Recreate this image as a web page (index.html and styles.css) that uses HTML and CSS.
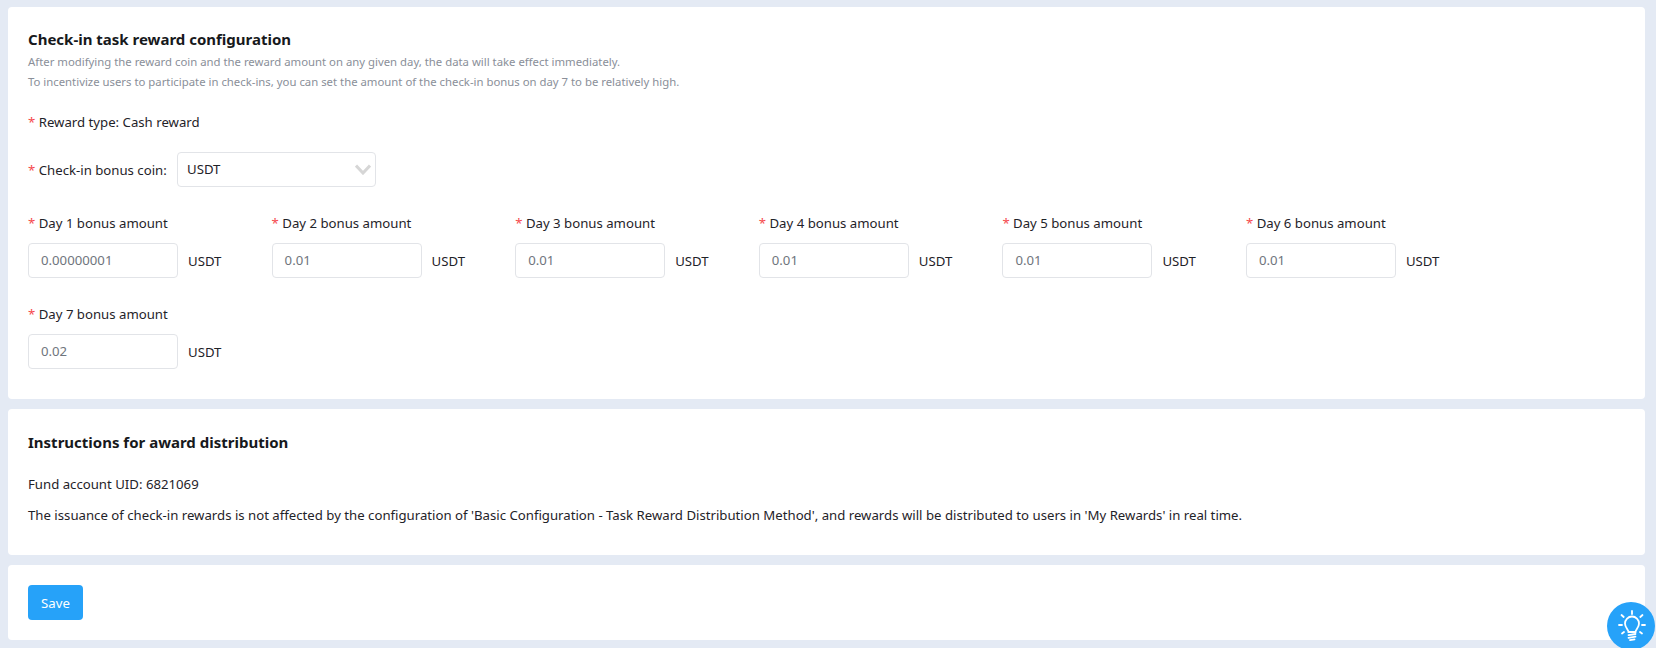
FILE: index.html
```html
<!DOCTYPE html>
<html lang="en">
<head>
<meta charset="utf-8">
<title>Check-in task reward configuration</title>
<link rel="stylesheet" href="styles.css">
</head>
<body>
<main class="page">
  <section class="card card-config">
    <h2 class="title">Check-in task reward configuration</h2>
    <div class="hints">
      <p class="hint">After modifying the reward coin and the reward amount on any given day, the data will take effect immediately.</p>
      <p class="hint">To incentivize users to participate in check-ins, you can set the amount of the check-in bonus on day 7 to be relatively high.</p>
    </div>
    <div class="line reward-type"><span class="req">*</span> Reward type: Cash reward</div>
    <div class="line coin-row">
      <label class="coin-label"><span class="req">*</span> Check-in bonus coin:</label>
      <div class="select">USDT
        <svg class="chev" viewBox="0 0 16 11" width="16" height="11"><path d="M1 1.500 8 9l7-7.500" fill="none" stroke="#d6d6d6" stroke-width="3"/></svg>
      </div>
    </div>
    <div class="days">
      <div class="day"><div class="day-label"><span class="req">*</span> Day 1 bonus amount</div><div class="day-input"><div class="input">0.00000001</div><span>USDT</span></div></div>
      <div class="day"><div class="day-label"><span class="req">*</span> Day 2 bonus amount</div><div class="day-input"><div class="input">0.01</div><span>USDT</span></div></div>
      <div class="day"><div class="day-label"><span class="req">*</span> Day 3 bonus amount</div><div class="day-input"><div class="input">0.01</div><span>USDT</span></div></div>
      <div class="day"><div class="day-label"><span class="req">*</span> Day 4 bonus amount</div><div class="day-input"><div class="input">0.01</div><span>USDT</span></div></div>
      <div class="day"><div class="day-label"><span class="req">*</span> Day 5 bonus amount</div><div class="day-input"><div class="input">0.01</div><span>USDT</span></div></div>
      <div class="day"><div class="day-label"><span class="req">*</span> Day 6 bonus amount</div><div class="day-input"><div class="input">0.01</div><span>USDT</span></div></div>
      <div class="day"><div class="day-label"><span class="req">*</span> Day 7 bonus amount</div><div class="day-input"><div class="input">0.02</div><span>USDT</span></div></div>
    </div>
  </section>
  <section class="card card-info">
    <h2 class="title">Instructions for award distribution</h2>
    <p class="info uid">Fund account UID: 6821069</p>
    <p class="info">The issuance of check-in rewards is not affected by the configuration of 'Basic Configuration - Task Reward Distribution Method', and rewards will be distributed to users in 'My Rewards' in real time.</p>
  </section>
  <section class="card card-save">
    <button class="btn" type="button">Save</button>
  </section>
</main>
<div class="help">
  <svg viewBox="-1 0 48 48" width="48" height="48" fill="none" stroke="#fff" stroke-linecap="round">
    <path d="M20.500 30c0-2.500-3.500-4-3.500-8.500a7 7 0 0 1 14 0c0 4.500-3.500 6-3.500 8.500z" stroke-width="1.800"/>
    <path d="M20.500 33.200 27.500 32M20.500 35.800 27.500 34.600M22 38.200 26.500 37.400" stroke-width="1.800"/>
    <path d="M24 9v3M13.500 13l2.200 2M34.500 13l-2.200 2M11 23h3M34 23h3M14 31.500l2-1.500M34 31.500l-2-1.500" stroke-width="1.800"/>
  </svg>
</div>
</body>
</html>
```
FILE: styles.css
```css
* { box-sizing: border-box; }
html, body { margin: 0; padding: 0; height: 100%; overflow: hidden; }
body {
  background: #e4eaf4;
  font-family: "Noto Sans", Roboto, sans-serif;
  font-size: 13.200px;
  color: #1f2329;
}
.page {
  display: flex;
  flex-direction: column;
  gap: 10px;
  padding: 7px 11px 0 8px;
}
.card {
  background: #fff;
  border-radius: 4px;
  padding: 20px;
}
.card-config { height: 392px; padding-top: 22px; }
.card-info { height: 146px; padding-top: 23px; }
.card-save { height: 75px; }
.title {
  margin: 0;
  font-size: 15px;
  line-height: 20px;
  font-weight: 700;
  color: #17191c;
}
.hints { margin-top: 3px; }
.hint {
  margin: 0;
  font-size: 11.350px;
  line-height: 20px;
  color: #8a8f99;
}
.line { display: flex; align-items: center; }
.reward-type { display: block; margin-top: 20px; line-height: 20px; }
.req { color: #f5484d; }
.coin-row { margin-top: 20px; }
.coin-label { width: 149px; }
.select {
  position: relative;
  width: 199px;
  height: 35px;
  padding-left: 9px;
  line-height: 33px;
  border: 1px solid #e2e4e8;
  border-radius: 4px;
}
.chev { position: absolute; right: 4px; top: 11px; }
.days {
  display: grid;
  grid-template-columns: repeat(6, 243.600px);
  row-gap: 26px;
  margin-top: 26px;
}
.day-label { line-height: 20px; }
.day-input {
  display: flex;
  align-items: center;
  gap: 10px;
  margin-top: 10px;
}
.input {
  width: 150px;
  height: 35px;
  padding-left: 12px;
  line-height: 33px;
  border: 1px solid #e2e4e8;
  border-radius: 4px;
  color: #6f757d;
}
.info { margin: 0; line-height: 20px; }
.uid { margin-top: 22px; margin-bottom: 11px; }
.btn {
  width: 55px;
  height: 35px;
  padding: 0;
  border: 0;
  border-radius: 4px;
  background: #26a2f9;
  color: #fff;
  font: inherit;
}
.help {
  position: fixed;
  left: 1607px;
  top: 602px;
  width: 48px;
  height: 48px;
  border-radius: 50%;
  background: #26a2f9;
}
```
